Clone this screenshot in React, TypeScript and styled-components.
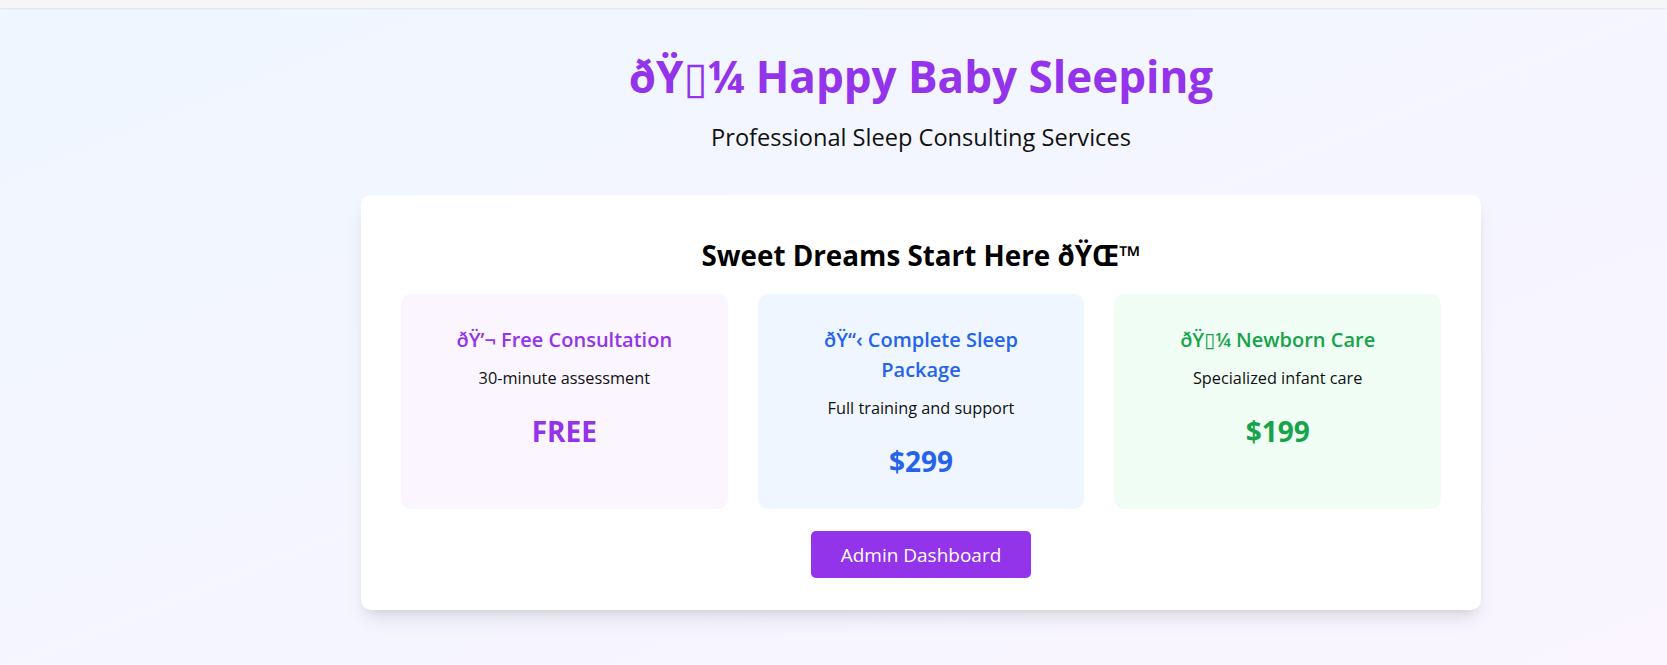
import React from "react";
import styled, { createGlobalStyle } from "styled-components";

const GlobalStyle = createGlobalStyle`
  html, body { margin: 0; padding: 0; }
  body {
    font-family: "Open Sans", "Noto Sans", "DejaVu Sans", sans-serif;
    color: #111;
  }
  * { box-sizing: border-box; }
`;

const Page = styled.div`
  min-height: 100vh;
  display: flex;
  flex-direction: column;
  background: linear-gradient(to bottom right, #eff6ff, #faf5ff);
`;

const TopStrip = styled.div`
  height: 8px;
  background: #f6f6f6;
  box-shadow: 0 1px 2px rgba(0, 0, 0, 0.08);
`;

const Main = styled.main`
  padding: 43px 0 40px 175px;
  display: flex;
  flex-direction: column;
  align-items: center;
`;

const Title = styled.h1`
  margin: 0;
  font-size: 44px;
  line-height: 50px;
  font-weight: 700;
  color: #9333ea;
  text-align: center;
`;

const Subtitle = styled.p`
  margin: 20px 0 0;
  font-size: 23.6px;
  line-height: 32px;
  color: #111;
  text-align: center;
`;

const Card = styled.section`
  margin-top: 42px;
  width: 1120px;
  background: #fff;
  border-radius: 10px;
  padding: 42px 40px 32px;
  box-shadow: 0 12px 19px -4px rgba(0, 0, 0, 0.1), 0 5px 8px -5px rgba(0, 0, 0, 0.1);
`;

const Heading = styled.h2`
  margin: 0 0 21px;
  font-size: 27.8px;
  line-height: 36px;
  font-weight: 700;
  text-align: center;
  color: #000;
`;

const Grid = styled.div`
  display: grid;
  grid-template-columns: repeat(3, 1fr);
  gap: 30px;
`;

const ServiceCard = styled.div<{ $bg: string }>`
  background: ${(p) => p.$bg};
  border-radius: 10px;
  padding: 31px 30px 27px;
  text-align: center;
`;

const ServiceTitle = styled.h3<{ $color: string }>`
  margin: 0 0 10px;
  font-size: 20px;
  line-height: 30px;
  font-weight: 600;
  color: ${(p) => p.$color};
`;

const ServiceDesc = styled.p`
  margin: 0;
  font-size: 16.3px;
  line-height: 27px;
  color: #111;
`;

const Price = styled.div<{ $color: string }>`
  margin-top: 18px;
  font-size: 28px;
  line-height: 42px;
  font-weight: 700;
  color: ${(p) => p.$color};
`;

const ButtonRow = styled.div`
  display: flex;
  justify-content: center;
  margin-top: 22px;
`;

const AdminButton = styled.button`
  height: 47px;
  padding: 0 30px;
  background: #9333ea;
  color: #fff;
  border: none;
  border-radius: 5px;
  font-family: inherit;
  font-size: 19px;
  cursor: pointer;
`;

const services = [
  {
    title: "ðŸ’¬ Free Consultation",
    desc: "30-minute assessment",
    price: "FREE",
    bg: "#faf5ff",
    color: "#9333ea",
  },
  {
    title: "ðŸ“‹ Complete Sleep Package",
    desc: "Full training and support",
    price: "$299",
    bg: "#eff6ff",
    color: "#2563eb",
  },
  {
    title: "ðŸ▯¼ Newborn Care",
    desc: "Specialized infant care",
    price: "$199",
    bg: "#f0fdf4",
    color: "#16a34a",
  },
];

export default function App() {
  return (
    <>
      <GlobalStyle />
      <Page>
        <TopStrip />
        <Main>
          <Title>ðŸ▯¼ Happy Baby Sleeping</Title>
          <Subtitle>Professional Sleep Consulting Services</Subtitle>
          <Card>
            <Heading>Sweet Dreams Start Here ðŸŒ™</Heading>
            <Grid>
              {services.map((s) => (
                <ServiceCard key={s.title} $bg={s.bg}>
                  <ServiceTitle $color={s.color}>{s.title}</ServiceTitle>
                  <ServiceDesc>{s.desc}</ServiceDesc>
                  <Price $color={s.color}>{s.price}</Price>
                </ServiceCard>
              ))}
            </Grid>
            <ButtonRow>
              <AdminButton>Admin Dashboard</AdminButton>
            </ButtonRow>
          </Card>
        </Main>
      </Page>
    </>
  );
}
